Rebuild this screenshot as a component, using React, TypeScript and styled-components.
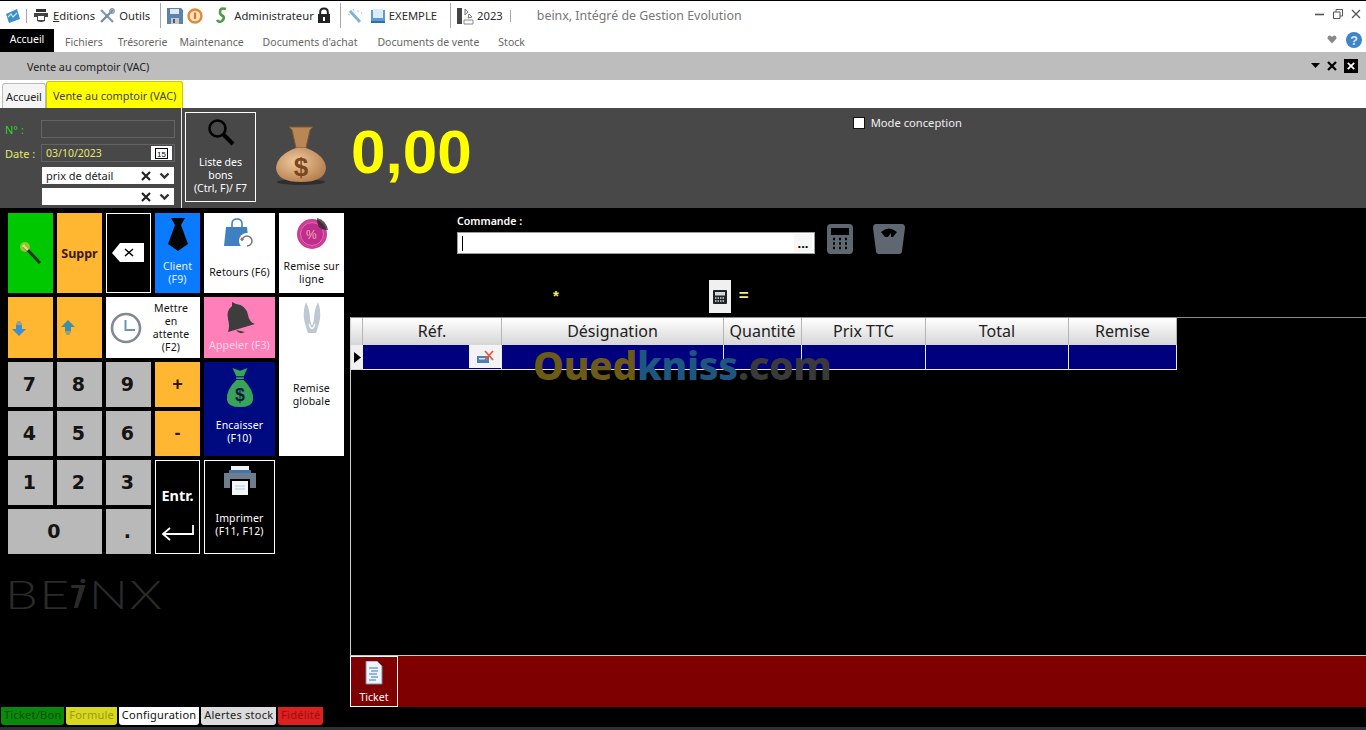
import React from "react";
import styled, { createGlobalStyle } from "styled-components";

const GlobalStyle = createGlobalStyle`
  html, body {
    margin: 0;
    padding: 0;
    background: #000;
  }
  * {
    box-sizing: border-box;
  }
  body {
    font-family: "Noto Sans", "Open Sans", sans-serif;
  }
`;

const Page = styled.div`
  width: 1366px;
  height: 730px;
  display: flex;
  flex-direction: column;
  overflow: hidden;
  background: #000;
`;

/* top window bars */
const TitleBar = styled.div`
  height: 29px;
  flex: none;
  display: flex;
  align-items: center;
  padding: 1px 5px 0 5px;
  border-top: 1px solid #000;
  background: #fff;
  color: #2b2b2b;
  font-size: 11.25px;
`;

const ToolLabel = styled.span<{ $left?: number }>`
  margin-left: ${(p) => p.$left ?? 4}px;
  white-space: nowrap;
`;

const ToolIcon = styled.span<{ $left?: number }>`
  display: flex;
  margin-left: ${(p) => p.$left ?? 4}px;
`;

const ToolSep = styled.span<{ $left: number; $h?: number }>`
  width: 1px;
  height: ${(p) => p.$h ?? 25}px;
  margin-left: ${(p) => p.$left}px;
  background: #a8a8a8;
`;

const AppTitle = styled.span`
  margin-left: 26px;
  color: #777;
  font-size: 12.4px;
  white-space: nowrap;
`;

const WindowButtons = styled.div`
  margin-left: auto;
  display: flex;
  align-items: center;
  gap: 8px;
  margin-top: -4px;
`;

const MenuBar = styled.div`
  height: 23px;
  flex: none;
  display: flex;
  align-items: stretch;
  background: #fff;
  font-size: 10.5px;
  color: #666;
`;

const HomeTab = styled.div`
  width: 54px;
  background: #000;
  color: #fff;
  display: flex;
  align-items: center;
  justify-content: center;
  padding-bottom: 3px;
`;

const MenuItem = styled.div<{ $left: number }>`
  margin-left: ${(p) => p.$left}px;
  padding-top: 6px;
  white-space: nowrap;
`;

const MenuRight = styled.div`
  margin-left: auto;
  display: flex;
  align-items: center;
  gap: 9px;
  padding: 0 4px 2px 0;
`;

const DocBar = styled.div`
  height: 28px;
  flex: none;
  display: flex;
  align-items: center;
  padding: 0 8px 0 27px;
  background: #bdbdbd;
  color: #222;
  font-size: 10.8px;
`;

const DocButtons = styled.div`
  margin-left: auto;
  display: flex;
  align-items: center;
  gap: 7px;
`;

const BlackClose = styled.span`
  width: 14px;
  height: 14px;
  display: flex;
  align-items: center;
  justify-content: center;
  background: #000;
`;

const TabsBar = styled.div`
  height: 28px;
  flex: none;
  display: flex;
  align-items: flex-end;
  padding-left: 2px;
  background: #fff;
  font-size: 10.9px;
`;

const DocTab = styled.div<{ $active?: boolean }>`
  height: ${(p) => (p.$active ? 27 : 25)}px;
  display: flex;
  align-items: center;
  padding: ${(p) => (p.$active ? "0 6px" : "0 3px")};
  border: 1px solid ${(p) => (p.$active ? "#c9c900" : "#bbb")};
  border-bottom: none;
  border-radius: 3px 3px 0 0;
  background: ${(p) => (p.$active ? "#ffff00" : "#f4f4f4")};
  color: ${(p) => (p.$active ? "#444" : "#222")};
  white-space: nowrap;
`;

/* dark form header */
const Header = styled.div`
  height: 100px;
  flex: none;
  display: flex;
  align-items: flex-start;
  background: #484848;
`;

const Fields = styled.div`
  width: 181px;
  height: 100%;
  flex: none;
  display: grid;
  grid-template-columns: 36px 134px;
  grid-template-rows: 24px 23px 21px 17px;
  align-content: start;
  padding: 12px 0 0 5px;
  font-size: 11px;
`;

const FieldLabel = styled.span<{ $color: string }>`
  height: 18px;
  color: ${(p) => p.$color};
  display: flex;
  align-items: center;
  font-size: 11px;
  white-space: nowrap;
`;

const FieldBox = styled.div<{ $color?: string }>`
  width: 134px;
  height: 18px;
  display: flex;
  align-items: center;
  justify-content: space-between;
  padding: 0 2px 0 4px;
  border: 1px solid #636363;
  color: ${(p) => p.$color ?? "#fff"};
  font-size: 10.5px;
`;

const CalendarChip = styled.span`
  width: 21px;
  height: 14px;
  display: flex;
  align-items: center;
  justify-content: center;
  background: #fff;
`;

const ComboBox = styled.div`
  grid-column: 2;
  margin-left: 1px;
  width: 132px;
  height: 17px;
  display: flex;
  align-items: center;
  padding: 0 4px;
  background: #fff;
  color: #222;
`;

const ComboValue = styled.span`
  flex: 1;
  white-space: nowrap;
`;

const ComboIcons = styled.span`
  display: flex;
  align-items: center;
  gap: 8px;
`;

const HeaderSep = styled.div`
  width: 1px;
  height: 100%;
  flex: none;
  background: #e6e6e6;
`;

const ListButton = styled.div`
  width: 71px;
  height: 90px;
  flex: none;
  margin: 4px 0 0 3px;
  display: flex;
  flex-direction: column;
  align-items: center;
  padding-top: 4px;
  border: 1px solid #fff;
  color: #fff;
  font-size: 10.5px;
  line-height: 13px;
  text-align: center;
`;

const ListCaption = styled.span`
  margin-top: 9px;
  white-space: nowrap;
`;

const BagSlot = styled.div`
  margin: 18px 0 0 19px;
  display: flex;
`;

const Amount = styled.div`
  margin: 6px 0 0 23px;
  color: #ffff00;
  font-family: "Liberation Sans", Arial, sans-serif;
  font-weight: 700;
  font-size: 62px;
  line-height: 76px;
`;

const ModeRow = styled.label`
  margin: 7px 0 0 381px;
  display: flex;
  align-items: center;
  gap: 6px;
  color: #f0f0f0;
  font-size: 11.2px;
`;

const CheckSquare = styled.span`
  width: 12px;
  height: 12px;
  background: #fff;
  border: 1px solid #111;
`;

/* main black area */
const Main = styled.div`
  height: 519px;
  flex: none;
  display: grid;
  grid-template-columns: 350px 1fr;
  background: #000;
`;

const LeftColumn = styled.div`
  display: flex;
  flex-direction: column;
  padding: 5px 0 2px 0;
`;

const Pad = styled.div`
  display: grid;
  margin-left: 8px;
  grid-template-columns: 45px 45px 45px 45px 71px 65px;
  grid-template-rows: 80px 61px 45px 45px 45px 45px;
  gap: 4px;
`;

const Key = styled.div<{ $bg: string; $fg?: string; $col?: string; $row?: string; $outlined?: boolean }>`
  grid-column: ${(p) => p.$col ?? "auto"};
  grid-row: ${(p) => p.$row ?? "auto"};
  display: flex;
  flex-direction: column;
  align-items: center;
  justify-content: center;
  background: ${(p) => p.$bg};
  color: ${(p) => p.$fg ?? "#111"};
  border: ${(p) => (p.$outlined ? "1px solid #fff" : "none")};
  font-size: 10.5px;
  line-height: 13px;
  letter-spacing: 0.15px;
  text-align: center;
`;

const DigitKey = styled(Key).attrs({ $bg: "#b9b9b9" })`
  padding-right: 2px;
  font-family: "DejaVu Sans", Verdana, sans-serif;
  font-weight: 700;
  font-size: 19px;
  color: #141414;
`;

const OpKey = styled(Key).attrs({ $bg: "#ffb732" })`
  font-family: "Liberation Sans", Arial, sans-serif;
  font-weight: 700;
  font-size: 18px;
  color: #2a1800;
`;

const ArrowKey = styled(Key).attrs({ $bg: "#ffb732" })`
  align-items: flex-start;
  padding-left: 4px;
`;

const EnterKey = styled(Key)`
  padding-top: 20px;
`;

const BoldKeyText = styled.span<{ $color: string; $size: number }>`
  color: ${(p) => p.$color};
  font-weight: 700;
  font-size: ${(p) => p.$size}px;
  letter-spacing: 0;
`;

const IconKey = styled(Key)`
  justify-content: flex-start;
  padding-top: 5px;
`;

const KeyCaption = styled.span<{ $top: number }>`
  margin-top: ${(p) => p.$top}px;
`;

const WaitKey = styled(Key)`
  flex-direction: row;
  justify-content: flex-start;
  padding-left: 4px;
`;

const WaitText = styled.span`
  flex: 1;
`;

const LogoRow = styled.div`
  margin: 23px 0 0 5px;
  display: flex;
  align-items: center;
  height: 34px;
  color: #2b2b2b;
  font-family: "Lato", sans-serif;
  font-weight: 300;
  font-size: 40px;
  line-height: 34px;
  letter-spacing: 1px;
  transform: scaleX(1.3);
  transform-origin: left center;
`;

const StatusTabs = styled.div`
  margin-top: auto;
  display: flex;
  padding-left: 1px;
  font-size: 11px;
  letter-spacing: 0.25px;
`;

const StatusTab = styled.div<{ $bg: string; $fg: string }>`
  height: 18px;
  display: flex;
  align-items: center;
  padding: 0 3px 3px;
  margin-right: 1.75px;
  border-radius: 0 0 3px 3px;
  background: ${(p) => p.$bg};
  color: ${(p) => p.$fg};
  white-space: nowrap;
`;

const RightColumn = styled.div`
  display: flex;
  flex-direction: column;
  padding-bottom: 20px;
`;

const CommandBlock = styled.div`
  height: 72px;
  flex: none;
  padding: 6px 0 0 107px;
`;

const CommandLabel = styled.div`
  height: 18px;
  color: #fff;
  font-size: 10.6px;
  font-weight: 600;
`;

const CommandRow = styled.div`
  display: flex;
  align-items: flex-end;
  height: 22px;
`;

const CommandInput = styled.div`
  width: 358px;
  height: 22px;
  display: flex;
  align-items: center;
  justify-content: space-between;
  padding: 0 2px 0 4px;
  border: 1px solid #9c9c9c;
  background: #fff;
`;

const Caret = styled.span`
  width: 1px;
  height: 15px;
  background: #000;
`;

const Dots = styled.span`
  width: 18px;
  height: 18px;
  display: flex;
  align-items: center;
  justify-content: center;
  background: #f6f6f6;
  color: #000;
  font-weight: 700;
  font-size: 13px;
  line-height: 10px;
`;

const FormulaRow = styled.div`
  height: 37px;
  flex: none;
  display: flex;
  padding-left: 203px;
  align-items: flex-start;
`;

const Star = styled.span`
  margin-top: 7px;
  color: #f0f05a;
  font-family: "Liberation Sans", sans-serif;
  font-weight: 700;
  font-size: 15px;
`;

const CalcChip = styled.span`
  width: 22px;
  height: 33px;
  margin-left: 150px;
  display: flex;
  align-items: center;
  justify-content: center;
  background: #f0f0f0;
`;

const EqualSign = styled.span`
  margin: 6px 0 0 8px;
  color: #f3e98a;
  font-family: "Liberation Sans", sans-serif;
  font-weight: 700;
  font-size: 17px;
`;

const GridFrame = styled.div`
  position: relative;
  flex: 1;
  border-top: 1px solid #8a8a8a;
  border-left: 1px solid #d0d0d0;
  border-bottom: 1px solid #c8c8c8;
`;

const DataGrid = styled.div`
  display: grid;
  width: 826px;
  grid-template-columns: 12px 139px 222px 78px 124px 143px 108px;
  grid-template-rows: 27px 25px;
`;

const HeadCell = styled.div`
  display: flex;
  align-items: center;
  justify-content: center;
  padding-bottom: 2px;
  border-right: 1px solid #b4b4b4;
  background: linear-gradient(#ffffff, #d6d6d6);
  color: #222;
  font-size: 16px;
  line-height: 22px;
`;

const RowMarker = styled.div`
  display: flex;
  align-items: center;
  justify-content: center;
  background: #f0f0f0;
  border-bottom: 1px solid #d8d8d8;
`;

const Cell = styled.div`
  display: flex;
  justify-content: flex-end;
  background: #00007f;
  border-right: 1px solid #e8e8e8;
  border-bottom: 1px solid #e8e8e8;
`;

const ClearButton = styled.span`
  width: 32px;
  height: 23px;
  display: flex;
  align-items: center;
  justify-content: center;
  background: #f3f3f3;
`;

/* sits over the grid, part of the source picture */
const Watermark = styled.div`
  position: absolute;
  left: 182px;
  top: 27px;
  display: flex;
  font-family: "Noto Sans", sans-serif;
  font-weight: 800;
  font-size: 39px;
  line-height: 40px;
  letter-spacing: -0.3px;
  pointer-events: none;
`;

const WatermarkPart = styled.span<{ $color: string }>`
  color: ${(p) => p.$color};
`;

const TicketBar = styled.div`
  height: 51px;
  flex: none;
  background: #7f0000;
`;

const TicketButton = styled.div`
  width: 48px;
  height: 51px;
  display: flex;
  flex-direction: column;
  align-items: center;
  padding-top: 4px;
  border: 1px solid #fff;
  color: #fff;
  font-size: 10.5px;
`;

const TicketCaption = styled.span`
  margin-top: 5px;
`;

const BottomStrip = styled.div`
  flex: 1;
  background: #2b3236;
`;

/* icons */
const CloseGlyph: React.FC<{ size: number; color: string; w?: number }> = ({ size, color, w = 2.2 }) => (
  <svg width={size} height={size} viewBox="0 0 10 10">
    <path d="M1 1 L9 9 M9 1 L1 9" stroke={color} strokeWidth={w} fill="none" />
  </svg>
);

const ChevronGlyph = () => (
  <svg width="11" height="8" viewBox="0 0 11 8">
    <path d="M1.5 1.5 L5.5 5.5 L9.5 1.5" stroke="#333" strokeWidth="2.4" fill="none" />
  </svg>
);

const AppIcon = () => (
  <svg width="16" height="16" viewBox="0 0 16 16">
    <path d="M1 6 L12 1 L15 11 L4 15 Z" fill="#3d8fc7" />
    <path d="M3 9 L6 6 L8 9 L12 5" stroke="#bfe6fa" strokeWidth="1.2" fill="none" />
  </svg>
);

const PrinterSmall = () => (
  <svg width="16" height="16" viewBox="0 0 16 16">
    <path d="M3 1 H13 V4 H3 Z" fill="#333" />
    <path d="M1 5 H15 V9 H12 V13 Q8 15 4 13 V9 H1 Z" fill="#444" />
    <path d="M5 8 H11 V12 H5 Z" fill="#fff" />
  </svg>
);

const ToolsIcon = () => (
  <svg width="16" height="16" viewBox="0 0 16 16">
    <path d="M2 2 L14 14" stroke="#8d9aa6" strokeWidth="2.4" />
    <path d="M14 2 L2 14" stroke="#6f8fa8" strokeWidth="2.4" />
    <circle cx="13" cy="3" r="2.2" fill="none" stroke="#8d9aa6" strokeWidth="1.4" />
  </svg>
);

const SaveIcon = () => (
  <svg width="16" height="16" viewBox="0 0 16 16">
    <path d="M0 0 H14 L16 2 V16 H0 Z" fill="#5b82ad" />
    <path d="M3 1 H12 V6 H3 Z" fill="#dfe8f2" />
    <path d="M4 10 H12 V16 H4 Z" fill="#c7c7c7" />
    <path d="M6 11 H8 V15 H6 Z" fill="#3d5d82" />
  </svg>
);

const OrangeDisc = () => (
  <svg width="16" height="16" viewBox="0 0 16 16">
    <circle cx="8" cy="8" r="6.5" fill="#fbe3c4" stroke="#d98c3a" strokeWidth="2.4" />
    <path d="M8 4.5 V11" stroke="#d07a28" strokeWidth="2.4" />
  </svg>
);

const GreenS = () => (
  <svg width="16" height="17" viewBox="0 0 16 17">
    <path d="M12 2 Q6 0 6 5 Q6 8 9 9 Q11 11 8 14 Q5 16 3 13" stroke="#4e9a45" strokeWidth="2.6" fill="none" />
  </svg>
);

const LockIcon = () => (
  <svg width="14" height="17" viewBox="0 0 14 17">
    <path d="M3.2 8 V5 Q3.2 1.4 7 1.4 Q10.8 1.4 10.8 5 V8" stroke="#222" strokeWidth="2" fill="none" />
    <path d="M1 7 H13 V16 H1 Z" fill="#222" />
    <path d="M6 10 H8 V14 H6 Z" fill="#fff" />
  </svg>
);

const WandSmall = () => (
  <svg width="17" height="16" viewBox="0 0 17 16">
    <path d="M3 3 L13 14" stroke="#7fb4d9" strokeWidth="3" />
    <path d="M6 1 L7 3 M1 6 L3 7 M11 2 L11 4 M14 4 L15 6" stroke="#a9cbe3" strokeWidth="1" />
  </svg>
);

const BookIcon = () => (
  <svg width="16" height="16" viewBox="0 0 16 16">
    <path d="M1 2 V13 H15 V2 L13 2 V10 H3 V2 Z" fill="#5b9bd5" />
    <path d="M3 1 H13 V10 H3 Z" fill="#dcebf7" />
    <path d="M1 13 H15 V15 H1 Z" fill="#2f6fae" />
  </svg>
);

const YearIcon = () => (
  <svg width="17" height="18" viewBox="0 0 17 18">
    <path d="M0 1 H5 V17 H0 Z" fill="#444" />
    <path d="M8 2 L11 5 L8 8 Z M12 7 L15 10 L11 11 Z" fill="none" stroke="#777" strokeWidth="1" />
    <path d="M7 13 H16 V17 H7 Z" fill="none" stroke="#888" strokeWidth="1" />
  </svg>
);

const HelpIcon = () => (
  <svg width="16" height="16" viewBox="0 0 16 16">
    <circle cx="8" cy="8" r="8" fill="#3f83c8" />
    <text x="8" y="12.5" textAnchor="middle" fontSize="12.5" fontWeight="700" fill="#dcecff" fontFamily="Liberation Sans">?</text>
  </svg>
);

const HeartIcon = () => (
  <svg width="10" height="9" viewBox="0 0 10 9">
    <path d="M5 8.5 L0.5 3.5 Q0.5 0.5 2.8 0.5 Q4.2 0.5 5 2 Q5.8 0.5 7.2 0.5 Q9.5 0.5 9.5 3.5 Z" fill="#8a8a8a" />
  </svg>
);

const SearchIcon = () => (
  <svg width="30" height="30" viewBox="0 0 30 30">
    <circle cx="11.5" cy="11.5" r="8" fill="none" stroke="#000" strokeWidth="2.6" />
    <path d="M17.5 17.5 L27 27" stroke="#000" strokeWidth="4" />
  </svg>
);

const MoneyBag = () => (
  <svg width="53" height="60" viewBox="0 0 53 60">
    <defs>
      <radialGradient id="bagFill" cx="0.4" cy="0.4" r="0.7">
        <stop offset="0" stopColor="#f0c9a0" />
        <stop offset="1" stopColor="#b27a48" />
      </radialGradient>
    </defs>
    <ellipse cx="26" cy="56" rx="24" ry="3" fill="#2e2e2e" />
    <path d="M14 1 H38 L35 4 L31 22 H21 L17 4 Z" fill="#b98655" stroke="#805631" />
    <path d="M21 22 Q2 29 1 42 Q2 56 26 56 Q50 56 51 42 Q50 29 31 22 Z" fill="url(#bagFill)" />
    <text x="26" y="50" textAnchor="middle" fontSize="26" fontWeight="700" fill="#7a461c" fontFamily="Liberation Sans">$</text>
  </svg>
);

const WandIcon = () => (
  <svg width="24" height="24" viewBox="0 0 24 24">
    <circle cx="6" cy="6" r="5" fill="#a8d030" opacity="0.8" />
    <path d="M5 5 L21 22" stroke="#30302c" strokeWidth="3" />
    <path d="M4 4 L9 9" stroke="#e9d37a" strokeWidth="3" />
  </svg>
);

const ArrowIcon: React.FC<{ up?: boolean; color: string }> = ({ up, color }) => (
  <svg width="14" height="16" viewBox="0 0 14 16">
    <g transform={up ? undefined : "rotate(180 7 8)"}>
      <path d="M7 0 L14 7 H10 V11 H4 V7 H0 Z" fill={color} />
      <path d="M4 12 H10 M5 14 H9" stroke={color} strokeWidth="1.2" />
    </g>
  </svg>
);

const BackspaceIcon = () => (
  <svg width="33" height="20" viewBox="0 0 33 20">
    <path d="M8 0 H32 V19 H8 L0 10 Z" fill="#fff" />
    <path d="M13 6 L21 13 M21 6 L13 13" stroke="#000" strokeWidth="1.5" />
  </svg>
);

const TieIcon = () => (
  <svg width="20" height="33" viewBox="0 0 20 33">
    <path d="M3 0 H17 L13 7 L20 26 L10 33 L0 26 L7 7 Z" fill="#050505" />
  </svg>
);

const ReturnBag = () => (
  <svg width="32" height="32" viewBox="0 0 32 32">
    <path d="M2 9 H23 L25 28 H0 Z" fill="#3f80c0" />
    <path d="M8 12 V6 Q8 1 13 1 Q18 1 18 6 V12" stroke="#3f80c0" strokeWidth="1.6" fill="none" />
    <circle cx="23" cy="23" r="8" fill="#fff" />
    <path d="M18 23 A5 5 0 1 1 23 28" stroke="#777" strokeWidth="1.5" fill="none" />
    <path d="M16 22 H20 L18 19 Z" fill="#e0523c" />
  </svg>
);

const DiscountIcon = () => (
  <svg width="32" height="32" viewBox="0 0 32 32">
    <circle cx="16" cy="16" r="15" fill="#cf3a99" />
    <circle cx="16" cy="16" r="11.5" fill="#be2f8d" stroke="#e77cbf" strokeWidth="0.8" />
    <path d="M21 0 Q30 2 32 12 Q25 12 23 9 Q21 6 21 0 Z" fill="#222" opacity="0.75" />
    <text x="15.5" y="20.5" textAnchor="middle" fontSize="12" fill="#f5a8b8" fontFamily="Liberation Sans">%</text>
  </svg>
);

const ClockIcon = () => (
  <svg width="32" height="32" viewBox="0 0 32 32">
    <circle cx="16" cy="16" r="14" fill="#fff" stroke="#808a90" strokeWidth="2.6" />
    <path d="M15.5 8 V18 H25" stroke="#6d93b8" strokeWidth="2" fill="none" />
  </svg>
);

const BellIcon = () => (
  <svg width="32" height="34" viewBox="0 0 32 34">
    <path d="M8 0 L12 2 Q22 3 24 13 Q25 20 31 22 L4 30 Q6 24 4 17 Q2 9 8 4 Z" fill="#3d3d3d" />
    <path d="M12 28 Q15 33 21 30 Z" fill="#3d3d3d" />
  </svg>
);

const ClampIcon = () => (
  <svg width="18" height="32" viewBox="0 0 18 32">
    <path d="M3 0 Q7 8 7 18 L9 24 L11 18 Q11 8 15 0 Q18 8 17 17 Q15 26 13 31 H5 Q3 26 1 17 Q0 8 3 0 Z" fill="#bcc8d2" />
    <path d="M6 22 Q9 31 12 22" stroke="#fff" strokeWidth="1.6" fill="none" />
  </svg>
);

const CashBag = () => (
  <svg width="28" height="41" viewBox="0 0 30 42">
    <path d="M7 0 L15 3 L23 0 L19 9 H11 Z" fill="#3aa35a" />
    <path d="M11 10 H19 V12 H11 Z" fill="#3aa35a" />
    <path d="M11 13 H19 Q30 24 29 34 Q28 42 15 42 Q2 42 1 34 Q0 24 11 13 Z" fill="#3aa35a" />
    <text x="15" y="35" textAnchor="middle" fontSize="19" fontWeight="700" fill="#0a1a40" fontFamily="Liberation Sans">$</text>
  </svg>
);

const EnterArrow = () => (
  <svg width="34" height="18" viewBox="0 0 34 18">
    <path d="M32 1 V10 H3 M9 4 L2 10 L9 16" stroke="#fff" strokeWidth="1.8" fill="none" />
  </svg>
);

const PrinterIcon = () => (
  <svg width="32" height="30" viewBox="0 0 32 30">
    <path d="M7 0 H25 V4 H7 Z" fill="#eef2f6" />
    <path d="M5 4 H27 V12 H5 Z" fill="#4274b0" />
    <path d="M0 7 H32 V22 H26 V13 H6 V22 H0 Z" fill="#6f7e8c" />
    <path d="M8 15 H24 V29 H8 Z" fill="#f3f6f9" />
    <path d="M11 20 H21 M11 23 H21" stroke="#b9c8d6" strokeWidth="1.2" />
  </svg>
);

const CalculatorIcon = () => (
  <svg width="26" height="30" viewBox="0 0 26 30">
    <rect x="0" y="0" width="26" height="30" rx="4" fill="#5f6870" />
    <rect x="4" y="4" width="18" height="7" fill="#000" />
    <path d="M6 15 H8 M12 15 H14 M18 15 H20 M6 19.5 H8 M12 19.5 H14 M18 19.5 H20 M6 24 H8 M12 24 H14 M18 24 H20" stroke="#000" strokeWidth="2.6" />
  </svg>
);

const ScaleIcon = () => (
  <svg width="32" height="30" viewBox="0 0 32 30">
    <path d="M3 0 H29 Q32 0 32 4 L29 27 Q29 30 26 30 H6 Q3 30 3 27 L0 4 Q0 0 3 0 Z" fill="#5f6870" />
    <path d="M8 8 Q16 1 24 8 L20 13 H18 L18 9 L15 13 H12 Z" fill="#000" />
  </svg>
);

const MiniCalc = () => (
  <svg width="14" height="14" viewBox="0 0 14 14">
    <rect x="0" y="0" width="14" height="14" rx="1" fill="#222" />
    <rect x="2" y="2" width="10" height="3.5" fill="#cfd8dd" />
    <path d="M2 8 H12 M2 11 H12" stroke="#cfd8dd" strokeWidth="1.4" strokeDasharray="1.5 1" />
  </svg>
);

const ClearIcon = () => (
  <svg width="17" height="14" viewBox="0 0 17 14">
    <rect x="0" y="6" width="12" height="7" fill="#4f7fb5" />
    <rect x="2" y="8" width="8" height="1.5" fill="#dbe7f3" />
    <path d="M8 1 L16 10 M16 1 L8 10" stroke="#e25a3c" strokeWidth="1.8" />
  </svg>
);

const TicketIcon = () => (
  <svg width="18" height="24" viewBox="0 0 18 24">
    <path d="M1 0 H12 L17 5 V23 H1 Z" fill="#eef3fa" stroke="#7a8aa8" />
    <path d="M4 7 H13 M6 10 H13 M4 13 H12 M6 16 H13 M4 19 H11" stroke="#3b7db5" strokeWidth="1.2" />
  </svg>
);

const CursorFigure = () => (
  <svg width="14" height="32" viewBox="0 0 14 32">
    <circle cx="10" cy="3" r="2" fill="#2b2b2b" />
    <path d="M1 7 H12 L6 30 H3 L7 10 H1 Z" fill="#2b2b2b" />
  </svg>
);

const COLUMNS = ["Réf.", "Désignation", "Quantité", "Prix TTC", "Total", "Remise"];
const MENU: [string, number][] = [
  ["Fichiers", 11],
  ["Trésorerie", 15],
  ["Maintenance", 12],
  ["Documents d'achat", 19],
  ["Documents de vente", 20],
  ["Stock", 19],
];

const App: React.FC = () => {
  return (
    <Page>
      <GlobalStyle />
      <TitleBar>
        <AppIcon />
        <ToolSep $left={5} $h={14} />
        <ToolIcon $left={6}><PrinterSmall /></ToolIcon>
        <ToolLabel><u>E</u>ditions</ToolLabel>
        <ToolIcon><ToolsIcon /></ToolIcon>
        <ToolLabel>Outils</ToolLabel>
        <ToolSep $left={10} />
        <ToolIcon $left={6}><SaveIcon /></ToolIcon>
        <ToolIcon><OrangeDisc /></ToolIcon>
        <ToolIcon $left={11}><GreenS /></ToolIcon>
        <ToolLabel>Administrateur</ToolLabel>
        <ToolIcon $left={3}><LockIcon /></ToolIcon>
        <ToolSep $left={9} />
        <ToolIcon $left={6}><WandSmall /></ToolIcon>
        <ToolIcon $left={6}><BookIcon /></ToolIcon>
        <ToolLabel $left={3}>EXEMPLE</ToolLabel>
        <ToolSep $left={13} />
        <ToolIcon $left={6}><YearIcon /></ToolIcon>
        <ToolLabel $left={3}>2023</ToolLabel>
        <ToolSep $left={7} $h={12} />
        <AppTitle>beinx, Intégré de Gestion Evolution</AppTitle>
        <WindowButtons>
          <svg width="10" height="10" viewBox="0 0 10 10"><path d="M0 5.5 H9" stroke="#555" strokeWidth="1.6" /></svg>
          <svg width="10" height="10" viewBox="0 0 10 10"><path d="M0.5 3 H7 V9.5 H0.5 Z M3 3 V0.5 H9.5 V7 H7" stroke="#555" fill="none" /></svg>
          <CloseGlyph size={10} color="#555" w={1.3} />
        </WindowButtons>
      </TitleBar>

      <MenuBar>
        <HomeTab>Accueil</HomeTab>
        {MENU.map(([label, left]) => (
          <MenuItem key={label} $left={left}>{label}</MenuItem>
        ))}
        <MenuRight>
          <HeartIcon />
          <HelpIcon />
        </MenuRight>
      </MenuBar>

      <DocBar>
        Vente au comptoir (VAC)
        <DocButtons>
          <svg width="9" height="6" viewBox="0 0 9 6"><path d="M0 0 H9 L4.5 5 Z" fill="#000" /></svg>
          <CloseGlyph size={10} color="#000" />
          <BlackClose><CloseGlyph size={8} color="#fff" /></BlackClose>
        </DocButtons>
      </DocBar>

      <TabsBar>
        <DocTab>Accueil</DocTab>
        <DocTab $active>Vente au comptoir (VAC)</DocTab>
      </TabsBar>

      <Header>
        <Fields>
          <FieldLabel $color="#2fd02f">N° :</FieldLabel>
          <FieldBox />
          <FieldLabel $color="#e6e66a">Date :</FieldLabel>
          <FieldBox $color="#e6e66a">
            03/10/2023
            <CalendarChip>
              <svg width="13" height="11" viewBox="0 0 13 11">
                <rect x="0.5" y="0.5" width="12" height="10" fill="none" stroke="#000" />
                <text x="6.5" y="9" textAnchor="middle" fontSize="8" fill="#000" fontFamily="Liberation Sans">15</text>
              </svg>
            </CalendarChip>
          </FieldBox>
          <ComboBox>
            <ComboValue>prix de détail</ComboValue>
            <ComboIcons>
              <CloseGlyph size={10} color="#222" />
              <ChevronGlyph />
            </ComboIcons>
          </ComboBox>
          <ComboBox>
            <ComboValue />
            <ComboIcons>
              <CloseGlyph size={10} color="#222" />
              <ChevronGlyph />
            </ComboIcons>
          </ComboBox>
        </Fields>
        <HeaderSep />
        <ListButton>
          <SearchIcon />
          <ListCaption>Liste des<br />bons<br />(Ctrl, F)/ F7</ListCaption>
        </ListButton>
        <BagSlot><MoneyBag /></BagSlot>
        <Amount>0,00</Amount>
        <ModeRow>
          <CheckSquare />
          Mode conception
        </ModeRow>
      </Header>

      <Main>
        <LeftColumn>
          <Pad>
            <Key $bg="#00c800"><WandIcon /></Key>
            <Key $bg="#ffb732"><BoldKeyText $color="#3a1a08" $size={12.5}>Suppr</BoldKeyText></Key>
            <Key $bg="#000" $outlined><BackspaceIcon /></Key>
            <IconKey $bg="#0a7bff" $fg="#e6f4ff">
              <TieIcon />
              <KeyCaption $top={9}>Client<br />(F9)</KeyCaption>
            </IconKey>
            <IconKey $bg="#fff">
              <ReturnBag />
              <KeyCaption $top={16}>Retours (F6)</KeyCaption>
            </IconKey>
            <IconKey $bg="#fff">
              <DiscountIcon />
              <KeyCaption $top={10}>Remise sur<br />ligne</KeyCaption>
            </IconKey>

            <ArrowKey><ArrowIcon color="#3f8fd0" /></ArrowKey>
            <ArrowKey><ArrowIcon up color="#3f8fa8" /></ArrowKey>
            <WaitKey $bg="#fff" $col="span 2">
              <ClockIcon />
              <WaitText>Mettre<br />en<br />attente<br />(F2)</WaitText>
            </WaitKey>
            <IconKey $bg="#ff7fb8" $fg="#ffd9ea">
              <BellIcon />
              <KeyCaption $top={3}>Appeler (F3)</KeyCaption>
            </IconKey>
            <IconKey $bg="#fff" $row="span 3">
              <ClampIcon />
              <KeyCaption $top={48}>Remise<br />globale</KeyCaption>
            </IconKey>

            <DigitKey>7</DigitKey>
            <DigitKey>8</DigitKey>
            <DigitKey>9</DigitKey>
            <OpKey>+</OpKey>
            <IconKey $bg="#000a80" $fg="#fff" $row="span 2">
              <CashBag />
              <KeyCaption $top={11}>Encaisser<br />(F10)</KeyCaption>
            </IconKey>

            <DigitKey>4</DigitKey>
            <DigitKey>5</DigitKey>
            <DigitKey>6</DigitKey>
            <OpKey>-</OpKey>

            <DigitKey>1</DigitKey>
            <DigitKey>2</DigitKey>
            <DigitKey>3</DigitKey>
            <EnterKey $bg="#000" $outlined $row="span 2">
              <BoldKeyText $color="#fff" $size={14.5}>Entr.</BoldKeyText>
              <KeyCaption $top={22}><EnterArrow /></KeyCaption>
            </EnterKey>
            <IconKey $bg="#000" $fg="#fff" $outlined $row="span 2">
              <PrinterIcon />
              <KeyCaption $top={16}>Imprimer<br />(F11, F12)</KeyCaption>
            </IconKey>

            <DigitKey $col="span 2">0</DigitKey>
            <DigitKey>.</DigitKey>
          </Pad>

          <LogoRow>
            BE
            <CursorFigure />
            NX
          </LogoRow>

          <StatusTabs>
            <StatusTab $bg="#0a8a0a" $fg="#0b4f0b">Ticket/Bon</StatusTab>
            <StatusTab $bg="#d8d81e" $fg="#9a9a20">Formule</StatusTab>
            <StatusTab $bg="#fff" $fg="#111">Configuration</StatusTab>
            <StatusTab $bg="#dcdcdc" $fg="#222">Alertes stock</StatusTab>
            <StatusTab $bg="#dd2020" $fg="#9c1010">Fidélité</StatusTab>
          </StatusTabs>
        </LeftColumn>

        <RightColumn>
          <CommandBlock>
            <CommandLabel>Commande :</CommandLabel>
            <CommandRow>
              <CommandInput>
                <Caret />
                <Dots>...</Dots>
              </CommandInput>
              <ToolIcon $left={12}><CalculatorIcon /></ToolIcon>
              <ToolIcon $left={20}><ScaleIcon /></ToolIcon>
            </CommandRow>
          </CommandBlock>

          <FormulaRow>
            <Star>*</Star>
            <CalcChip><MiniCalc /></CalcChip>
            <EqualSign>=</EqualSign>
          </FormulaRow>

          <GridFrame>
            <DataGrid>
              <HeadCell />
              {COLUMNS.map((name) => (
                <HeadCell key={name}>{name}</HeadCell>
              ))}
              <RowMarker>
                <svg width="7" height="11" viewBox="0 0 7 11"><path d="M0 0 L7 5.5 L0 11 Z" fill="#000" /></svg>
              </RowMarker>
              <Cell><ClearButton><ClearIcon /></ClearButton></Cell>
              <Cell />
              <Cell />
              <Cell />
              <Cell />
              <Cell />
            </DataGrid>
            <Watermark>
              <WatermarkPart $color="#6b5a18">Oued</WatermarkPart>
              <WatermarkPart $color="#1f5680">kniss</WatermarkPart>
              <WatermarkPart $color="#3a3a3a">.com</WatermarkPart>
            </Watermark>
          </GridFrame>

          <TicketBar>
            <TicketButton>
              <TicketIcon />
              <TicketCaption>Ticket</TicketCaption>
            </TicketButton>
          </TicketBar>
        </RightColumn>
      </Main>
      <BottomStrip />
    </Page>
  );
};

export default App;
